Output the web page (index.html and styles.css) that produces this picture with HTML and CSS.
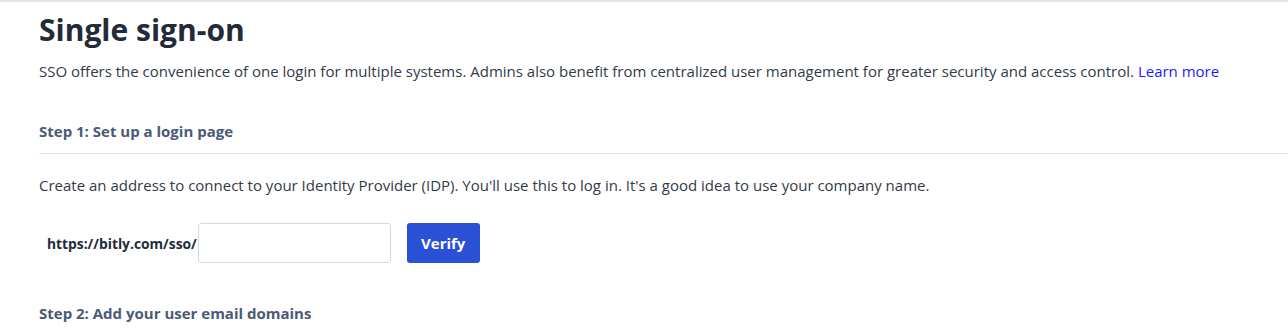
FILE: index.html
```html
<!DOCTYPE html>
<html lang="en">
<head>
<meta charset="utf-8">
<title>Single sign-on</title>
<link rel="stylesheet" href="styles.css">
</head>
<body>
<main class="page">
  <h1 class="title">Single sign-on</h1>
  <p class="intro">SSO offers the convenience of one login for multiple systems. Admins also benefit from centralized user management for greater security and access control. <a class="link" href="#">Learn more</a></p>
  <section class="step step-first">
    <h2 class="step-title">Step 1: Set up a login page</h2>
    <div class="step-body">
      <p class="step-text">Create an address to connect to your Identity Provider (IDP). You'll use this to log in. It's a good idea to use your company name.</p>
      <div class="url-row">
        <span class="url-prefix">https://bitly.com/sso/</span>
        <input class="url-input" type="text" aria-label="Company name">
        <button class="btn-primary" type="button">Verify</button>
      </div>
    </div>
  </section>
  <section class="step">
    <h2 class="step-title">Step 2: Add your user email domains</h2>
  </section>
</main>
</body>
</html>
```
FILE: styles.css
```css
html, body {
  margin: 0;
  padding: 0;
  background: #ffffff;
}
body {
  border-top: 2px solid #e1e5ec;
  font-family: "Open Sans", Lato, sans-serif;
  color: #333a48;
  overflow: hidden;
}
.page {
  padding: 0 0 0 39px;
}
.title {
  margin: 10px 0 0;
  font-size: 30px;
  line-height: 36px;
  font-weight: 700;
  color: #232b3b;
}
.intro {
  margin: 13px 0 0;
  font-size: 15px;
  line-height: 20px;
}
.link {
  color: #1a1aff;
  text-decoration: none;
}
.step-first {
  margin-top: 40px;
}
.step-title {
  margin: 0;
  font-size: 15px;
  line-height: 20px;
  font-weight: 700;
  color: #4b5a76;
  padding-bottom: 12px;
  border-bottom: 1px solid #e3e6ec;
}
.step + .step .step-title {
  border-bottom: none;
}
.step-body {
  padding-top: 21px;
}
.step-text {
  margin: 0;
  font-size: 15px;
  line-height: 20px;
}
.url-row {
  display: flex;
  align-items: center;
  margin-top: 28px;
  padding-left: 8px;
}
.url-prefix {
  font-size: 13.8px;
  font-weight: 700;
  color: #232b3b;
}
.url-input {
  box-sizing: border-box;
  width: 193px;
  height: 40px;
  margin: 0 16px 0 1px;
  border: 1px solid #d3d9e4;
  border-radius: 3px;
  background: #fff;
  padding: 0 10px;
  font-size: 14px;
}
.btn-primary {
  box-sizing: border-box;
  width: 73px;
  height: 40px;
  border: none;
  border-radius: 3px;
  background: #2a50d5;
  color: #ffffff;
  font-family: inherit;
  font-size: 15px;
  font-weight: 700;
  cursor: pointer;
}
.step + .step {
  margin-top: 40px;
}
```
